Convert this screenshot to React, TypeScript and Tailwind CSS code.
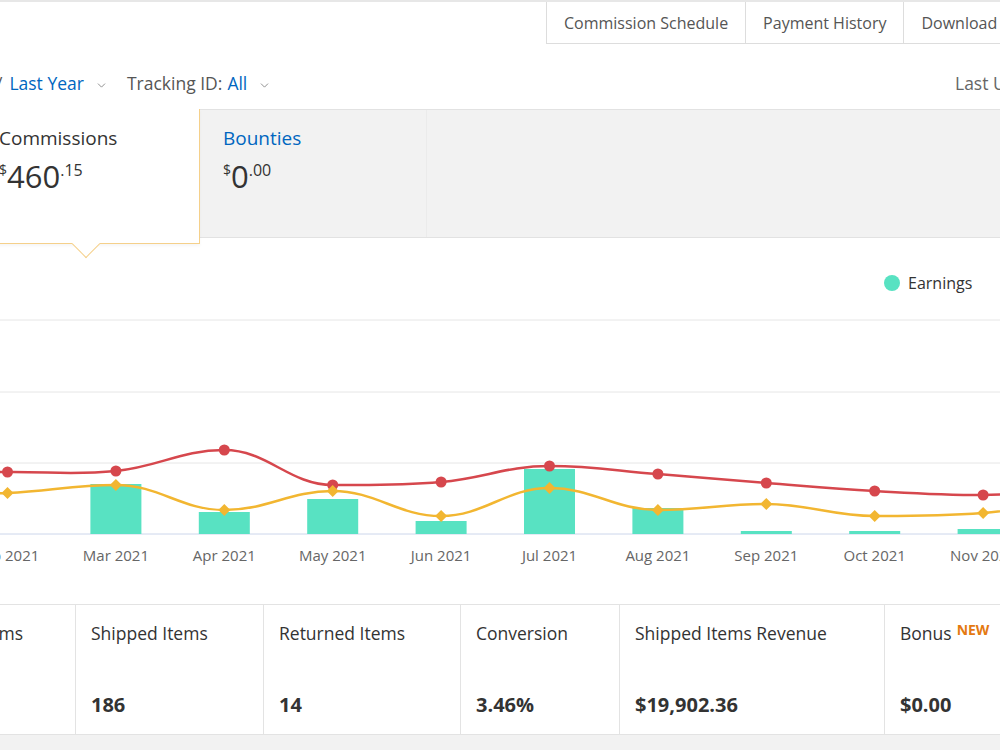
import { ChevronDown } from "lucide-react";

const tabs = ["Commission Schedule", "Payment History", "Download Reports"];

// x centres of the monthly slots (Jan and Dec sit just outside the plot)
const months = ["Jan 2021", "Feb 2021", "Mar 2021", "Apr 2021", "May 2021", "Jun 2021", "Jul 2021", "Aug 2021", "Sep 2021", "Oct 2021", "Nov 2021", "Dec 2021"];
const xs = months.map((_, i) => 7.5 + 108.4 * (i - 1));

const TOP = 238;
const BASE = 534 - TOP;
const clicks = [473, 472, 471, 450, 485, 482, 466, 474, 483, 491, 495, 488].map(y => y - TOP);
const ordered = [495, 493, 485, 510, 491, 516, 488, 510, 504, 516, 513, 500].map(y => y - TOP);
const earnings = [534, 534, 484, 512, 499, 521, 469, 508, 531, 531, 529, 520].map(y => y - TOP);

function spline(pts: [number, number][]) {
  const tangent = (i: number) => {
    const prev = pts[i - 1];
    const next = pts[i + 1];
    if (!prev || !next) return 0;
    const cur = pts[i];
    // flat tangent on peaks and valleys, like highcharts
    if ((cur[1] - prev[1]) * (next[1] - cur[1]) <= 0) return 0;
    return (next[1] - prev[1]) / (next[0] - prev[0]);
  };
  let d = `M${pts[0][0]},${pts[0][1]}`;
  for (let i = 0; i < pts.length - 1; i++) {
    const [x1, y1] = pts[i];
    const [x2, y2] = pts[i + 1];
    const h = (x2 - x1) * 0.4;
    d += ` C${x1 + h},${y1 + tangent(i) * h} ${x2 - h},${y2 - tangent(i + 1) * h} ${x2},${y2}`;
  }
  return d;
}

function EarningsChart() {
  const red = xs.map((x, i) => [x, clicks[i]] as [number, number]);
  const yellow = xs.map((x, i) => [x, ordered[i]] as [number, number]);
  return (
    <svg width="1000" height="366" className="block">
      {[320, 392, 463].map(y => (
        <line key={y} x1="0" x2="1000" y1={y - TOP} y2={y - TOP} stroke="#e6e6e6" strokeWidth="1" />
      ))}
      <line x1="0" x2="1000" y1={BASE} y2={BASE} stroke="#ccd6eb" strokeWidth="1" />

      {xs.map((x, i) =>
        earnings[i] < BASE ? (
          <rect key={i} x={x - 25.5} y={earnings[i]} width="51" height={BASE - earnings[i]} fill="#58e2c2" />
        ) : null
      )}

      <path d={spline(red)} fill="none" stroke="#d6474d" strokeWidth="2.5" />
      <path d={spline(yellow)} fill="none" stroke="#f2b631" strokeWidth="2.5" />
      {red.map(([x, y], i) => (
        <circle key={i} cx={x} cy={y} r="5.5" fill="#d6474d" />
      ))}
      {yellow.map(([x, y], i) => (
        <path key={i} d={`M${x},${y - 6} L${x + 6},${y} L${x},${y + 6} L${x - 6},${y} Z`} fill="#f2b631" />
      ))}

      {xs.map((x, i) => (
        <text key={i} x={x} y={323} textAnchor="middle" fontSize="15" fill="#666" fontFamily="Open Sans, sans-serif">
          {months[i]}
        </text>
      ))}

      <circle cx="892" cy={283 - TOP} r="8" fill="#58e2c2" />
      <text x="908" y={289 - TOP} fontSize="16" fill="#333" fontFamily="Open Sans, sans-serif">
        Earnings
      </text>
    </svg>
  );
}

const stats = [
  { label: "Ordered Items", value: "5,374", w: "w-[187px] -ml-[111px]" },
  { label: "Shipped Items", value: "186", w: "w-[188px]" },
  { label: "Returned Items", value: "14", w: "w-[197px]" },
  { label: "Conversion", value: "3.46%", w: "w-[159px]" },
  { label: "Shipped Items Revenue", value: "$19,902.36", w: "w-[265px]" },
  { label: "Bonus", value: "$0.00", w: "w-[200px]", badge: "NEW" },
];

export default function App() {
  return (
    <div className="w-[1000px] h-[750px] overflow-hidden bg-white font-['Open_Sans','Liberation_Sans',sans-serif] text-[#333]">
      {/* report links */}
      <div className="h-[44px] border-t-2 border-[#e7e7e7] flex">
        <div className="ml-[546px] flex whitespace-nowrap">
          {tabs.map(t => (
            <div key={t} className="h-[42px] px-[17px] flex items-center border-l border-b border-[#dddddd] text-[16px] text-[#555]">
              {t}
            </div>
          ))}
        </div>
      </div>

      {/* filters */}
      <div className="h-[65px] pt-[26px] flex items-start whitespace-nowrap text-[17.5px]">
        <div className="h-[26px] flex items-center -ml-[4px]">
          <span className="text-[#555]">/</span>
          <span className="ml-[7px] text-[#0066c0]">Last Year</span>
          <ChevronDown size={13} strokeWidth={1.5} className="ml-[11px] mt-[5px] text-[#777]" />
        </div>
        <div className="h-[26px] flex items-center ml-[19px]">
          <span className="text-[#555]">Tracking ID:</span>
          <span className="ml-[5px] text-[#0066c0]">All</span>
          <ChevronDown size={13} strokeWidth={1.5} className="ml-[11px] mt-[5px] text-[#777]" />
        </div>
        <div className="h-[26px] flex items-center ml-auto w-[45px] overflow-hidden text-[#666]">
          Last Updated
        </div>
      </div>

      {/* totals */}
      <div className="h-[129px] bg-[#f2f2f2] border-t border-b border-[#e2e2e2] flex items-start">
        <div className="relative z-10 -ml-[24px] -mt-px w-[224px] h-[135px] bg-white border-r border-b border-[#f5d08a] pl-[23px] pt-[16px] shadow-[0_2px_3px_rgba(0,0,0,0.04)]">
          <div className="text-[19px] leading-[26px] text-[#333]">Commissions</div>
          <div className="mt-[10px] flex items-start leading-none text-[#333]">
            <span className="text-[14px] mt-[2px]">$</span>
            <span className="text-[31px]">460</span>
            <span className="text-[16px] mt-[1px]">.15</span>
          </div>
          <div className="absolute left-[100px] -bottom-[11px] w-[20px] h-[20px] rotate-45 bg-white border-r border-b border-[#f5d08a]" />
        </div>
        <div className="w-[227px] h-[127px] border-r border-[#ebebeb] pl-[23px] pt-[15px]">
          <div className="text-[19px] leading-[26px] text-[#0066c0]">Bounties</div>
          <div className="mt-[10px] flex items-start leading-none text-[#333]">
            <span className="text-[14px] mt-[2px]">$</span>
            <span className="text-[31px]">0</span>
            <span className="text-[16px] mt-[1px]">.00</span>
          </div>
        </div>
      </div>

      <EarningsChart />

      {/* summary numbers */}
      <div className="h-[131px] border-t border-b border-[#e3e3e3] flex whitespace-nowrap">
        {stats.map(s => (
          <div key={s.label} className={`${s.w} shrink-0 border-r border-[#e3e3e3] pl-[15px] pt-[16px]`}>
            <div className="text-[17.5px] leading-[24px] text-[#333] flex items-start">
              {s.label}
              {s.badge && <span className="ml-[5px] text-[14px] leading-[18px] font-bold text-[#e47911]">{s.badge}</span>}
            </div>
            <div className="mt-[47px] text-[20px] leading-[26px] font-bold text-[#333]">{s.value}</div>
          </div>
        ))}
      </div>
      <div className="h-[20px] bg-[#f2f2f2]" />
    </div>
  );
}
